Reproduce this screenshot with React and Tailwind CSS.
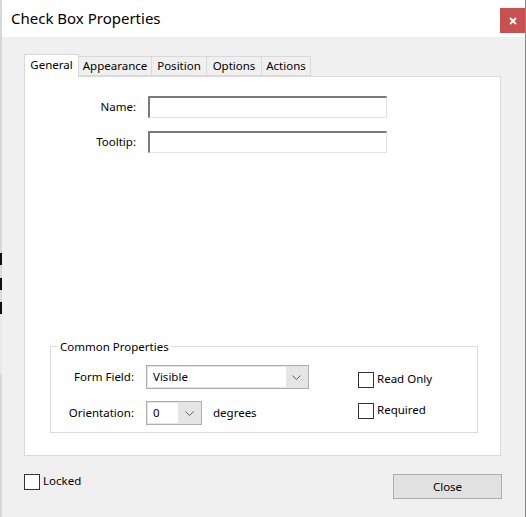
import React from "react";

const font = { fontFamily: '"Noto Sans", "Segoe UI", sans-serif' };

function Chevron() {
  return (
    <svg width="9" height="5" viewBox="0 0 9 5" className="text-[#606060]">
      <path d="M0.5 0.5 L4.5 4.5 L8.5 0.5" fill="none" stroke="currentColor" strokeWidth="1" />
    </svg>
  );
}

function Select({ value, width, fieldWidth }) {
  return (
    <div className={`flex h-[24px] ${width} border border-[#adadad] bg-[#e5e5e5] p-[1px]`}>
      <div className={`${fieldWidth} bg-white flex items-center pl-[5px]`}>{value}</div>
      <div className="flex-1 flex items-center justify-center">
        <Chevron />
      </div>
    </div>
  );
}

function CheckBox({ label }) {
  return (
    <div className="flex items-center gap-[3px]">
      <div className="w-[16px] h-[16px] border border-[#333333] bg-white" />
      <span className="-mt-[2px]">{label}</span>
    </div>
  );
}

export default function App() {
  return (
    <div className="w-[526px] h-[517px] flex text-black bg-[#f0f0f0] text-[11.5px]" style={font}>
      {/* desktop bits behind the window */}
      <div className="w-[2px] flex flex-col bg-[#d8d8d8]">
        <div className="h-[253px]" />
        <div className="h-[12px] bg-[#101010]" />
        <div className="h-[13px]" />
        <div className="h-[12px] bg-[#101010]" />
        <div className="h-[12px]" />
        <div className="h-[12px] bg-[#101010]" />
        <div className="h-[60px] bg-[#e8e8e8]" />
      </div>

      <div className="flex-1 flex flex-col border-r border-[#8a8a8a]">
        {/* title bar */}
        <div className="h-[37px] bg-white flex items-start justify-between shrink-0">
          <div className="pl-[9px] pt-[7px] text-[15px] leading-[22px]">Check Box Properties</div>
          <div className="mt-[8px] w-[25px] h-[25px] bg-[#c75050] flex items-center justify-center">
            <svg width="8" height="8" viewBox="0 0 8 8">
              <path d="M1 1 L7 7 M7 1 L1 7" stroke="white" strokeWidth="1.8" />
            </svg>
          </div>
        </div>

        {/* body */}
        <div className="flex-1 flex flex-col pt-[17px] pl-[22px] pr-[23px]">
          {/* tabs */}
          <div className="flex items-end h-[22px]">
            <div className="relative z-10 h-[23px] -mb-[1px] w-[55px] bg-white border border-b-0 border-[#d9d9d9] flex justify-center pt-[1px]">
              General
            </div>
            <div className="h-[20px] w-[73px] border border-l-0 border-[#d9d9d9] flex items-center justify-center">
              Appearance
            </div>
            <div className="h-[20px] w-[55px] border border-l-0 border-[#d9d9d9] flex items-center justify-center">
              Position
            </div>
            <div className="h-[20px] w-[55px] border border-l-0 border-[#d9d9d9] flex items-center justify-center">
              Options
            </div>
            <div className="h-[20px] w-[49px] border border-l-0 border-[#d9d9d9] flex items-center justify-center">
              Actions
            </div>
          </div>

          {/* tab panel */}
          <div className="w-[477px] h-[380px] bg-white border border-[#d9d9d9] flex flex-col pt-[19px]">
            <div className="flex items-center gap-[12px]">
              <div className="w-[111px] text-right">Name:</div>
              <div className="w-[239px] h-[22px] border border-t-2 border-l-2 border-t-[#7a7a7a] border-l-[#7a7a7a] border-r-[#e3e3e3] border-b-[#e3e3e3]" />
            </div>
            <div className="flex items-center gap-[12px] mt-[13px]">
              <div className="w-[111px] text-right">Tooltip:</div>
              <div className="w-[239px] h-[22px] border border-t-2 border-l-2 border-t-[#7a7a7a] border-l-[#7a7a7a] border-r-[#e3e3e3] border-b-[#e3e3e3]" />
            </div>

            <div className="flex-1" />

            {/* common properties group */}
            <div className="relative ml-[25px] mb-[22px] w-[428px] h-[87px] border border-[#dcdcdc] flex pt-[18px]">
              <div className="absolute -top-[8px] left-[7px] bg-white px-[2px] leading-[16px]">
                Common Properties
              </div>
              <div className="flex flex-col gap-[12px]">
                <div className="flex items-center gap-[12px]">
                  <div className="w-[83px] text-right">Form Field:</div>
                  <Select value="Visible" width="w-[163px]" fieldWidth="w-[138px]" />
                </div>
                <div className="flex items-center">
                  <div className="w-[83px] text-right mr-[12px]">Orientation:</div>
                  <Select value="0" width="w-[56px]" fieldWidth="w-[30px]" />
                  <span className="ml-[11px]">degrees</span>
                </div>
              </div>
              <div className="flex flex-col gap-[15px] ml-[49px] pt-[7px]">
                <CheckBox label="Read Only" />
                <CheckBox label="Required" />
              </div>
            </div>
          </div>

          {/* bottom row */}
          <div className="flex items-start justify-between mt-[18px]">
            <CheckBox label="Locked" />
            <div className="w-[109px] h-[25px] bg-[#e1e1e1] border border-[#adadad] flex items-center justify-center">
              Close
            </div>
          </div>
        </div>
      </div>
    </div>
  );
}
